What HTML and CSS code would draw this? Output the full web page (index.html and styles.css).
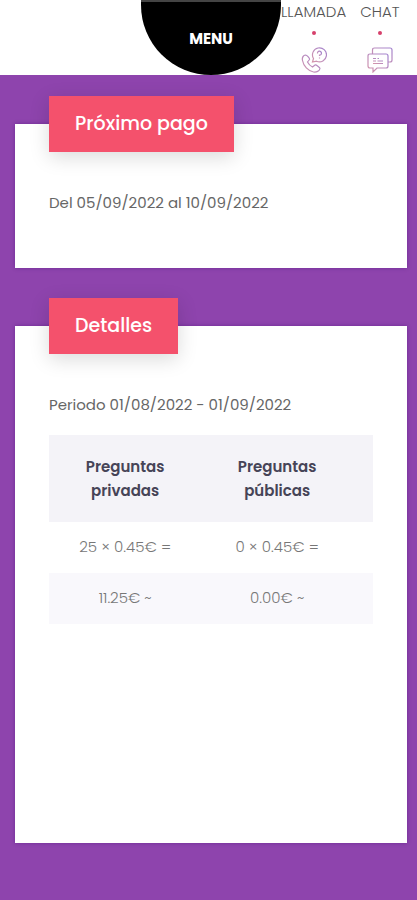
FILE: index.html
```html
<!DOCTYPE html>
<html lang="es">
<head>
  <meta charset="UTF-8">
  <meta name="viewport" content="width=device-width, initial-scale=1.0">
  <title>Próximo pago</title>
  <link rel="stylesheet" href="styles.css">
</head>
<body>

<header class="header">
  <button type="button" class="menu">MENU</button>
  <nav class="contact">
    <a href="#llamada" class="contact-link">
      LLAMADA
      <span class="dot"></span>
      <svg class="icon" viewBox="0 0 26 26">
        <path d="M4.500 8C2 8.500 1 11 1.500 13.500C2.500 19 7 24 12.500 25C15.500 25.500 18.500 24 19 21.500C19 20.500 15 17.500 14 18L11.500 20C9.500 19 7.500 17 6.500 15L8.500 12.500C9 11.500 6 8 4.500 8Z"/>
        <path d="M11.500 15L12.500 11.500A7 7 0 1 1 15.500 14.200Z"/>
        <path d="M16.500 6.500A2 2 0 1 1 18.500 8.200V9M18.500 10.500V11.500"/>
      </svg>
    </a>
    <a href="#chat" class="contact-link">
      CHAT
      <span class="dot"></span>
      <svg class="icon" viewBox="0 0 26 26">
        <path d="M5.500 7V3Q5.500 1 7.500 1H23Q25 1 25 3V13Q25 15 23 15H21"/>
        <path d="M3 7H19Q21 7 21 9V19Q21 21 19 21H10L6 25V21H3Q1 21 1 19V9Q1 7 3 7Z"/>
        <path d="M6 11.500H9M10.500 11.500H12M6 14H9M10.500 14H16M6 16.500H16"/>
      </svg>
    </a>
  </nav>
</header>

<!-- Icon stroke gradient -->
<svg class="defs" width="0" height="0" aria-hidden="true">
  <linearGradient id="stroke" x1="0" y1="1" x2="1" y2="0">
    <stop offset="0" stop-color="#d596ab"/>
    <stop offset="1" stop-color="#a283cf"/>
  </linearGradient>
</svg>

<main class="content">
  <section class="card">
    <h2 class="card-title">Próximo pago</h2>
    <p class="card-text">Del 05/09/2022 al 10/09/2022</p>
  </section>

  <section class="card card-details">
    <h2 class="card-title">Detalles</h2>
    <p class="card-text">Periodo 01/08/2022 - 01/09/2022</p>
    <table class="prices">
      <thead>
        <tr>
          <th>Preguntas privadas</th>
          <th>Preguntas públicas</th>
        </tr>
      </thead>
      <tbody>
        <tr>
          <td>25 × 0.45€ =</td>
          <td>0 × 0.45€ =</td>
        </tr>
        <tr>
          <td>11.25€ ~</td>
          <td>0.00€ ~</td>
        </tr>
      </tbody>
    </table>
  </section>
</main>

</body>
</html>
```
FILE: styles.css
```css
* {
  box-sizing: border-box;
}
body {
  margin: 0;
  min-height: 100vh;
  display: flex;
  flex-direction: column;
  font-family: Poppins, Inter, sans-serif;
  font-size: 15px;
  line-height: 24px;
  color: #666;
  background-color: #8e44ad;
}
.header {
  display: grid;
  grid-template-columns: 1fr 140px 1fr;
  padding-left: 5px;
  height: 75px;
  background-color: #fff;
}
.menu {
  grid-column: 2;
  padding: 0;
  border: none;
  border-top: 2px solid #444;
  border-radius: 0 0 70px 70px;
  background-color: #000;
  color: #fff;
  font-family: inherit;
  font-size: 15px;
  font-weight: 700;
  cursor: pointer;
}
.contact {
  display: flex;
  gap: 14px;
}
.contact-link {
  display: flex;
  flex-direction: column;
  align-items: center;
  color: #555;
  font-size: 15px;
  font-weight: 300;
  text-decoration: none;
}
.dot {
  width: 4px;
  height: 4px;
  margin: 7px 0 12px;
  border-radius: 50%;
  background-color: #d6406b;
}
.icon {
  width: 26px;
  height: 26px;
  fill: none;
  stroke: url(#stroke);
  stroke-width: 1.2;
}
.defs {
  position: absolute;
}
.content {
  flex: 1;
  display: flex;
  flex-direction: column;
  gap: 58px;
  padding: 49px 10px 57px 15px;
}
.card {
  padding: 0 34px 53px;
  background-color: #fff;
  box-shadow: 0 0 4px rgba(60, 0, 110, 0.4);
}
.card-details {
  flex: 1;
}
.card-title {
  width: fit-content;
  margin: -28px 0 39px;
  padding: 16px 26px;
  background-color: #f4516c;
  box-shadow: 0 5px 20px rgba(0, 0, 0, 0.15);
  color: #fff;
  font-size: 19px;
  font-weight: 500;
  line-height: 24px;
}
.card-text {
  margin: 0;
}
.prices {
  width: 100%;
  margin-top: 18px;
  border-collapse: collapse;
  table-layout: fixed;
  text-align: center;
}
.prices th,
.prices td {
  padding: 13px 20px 14px;
}
.prices th {
  padding: 20px 20px 19px;
  background-color: #f4f3f8;
  color: #464457;
  font-weight: 600;
}
.prices th:first-child {
  width: 47%;
}
.prices th:last-child,
.prices td:last-child {
  padding-right: 40px;
}
.prices td {
  color: #777;
  font-weight: 300;
}
.prices tbody tr:nth-child(even) {
  background-color: #f9f8fc;
}
```
